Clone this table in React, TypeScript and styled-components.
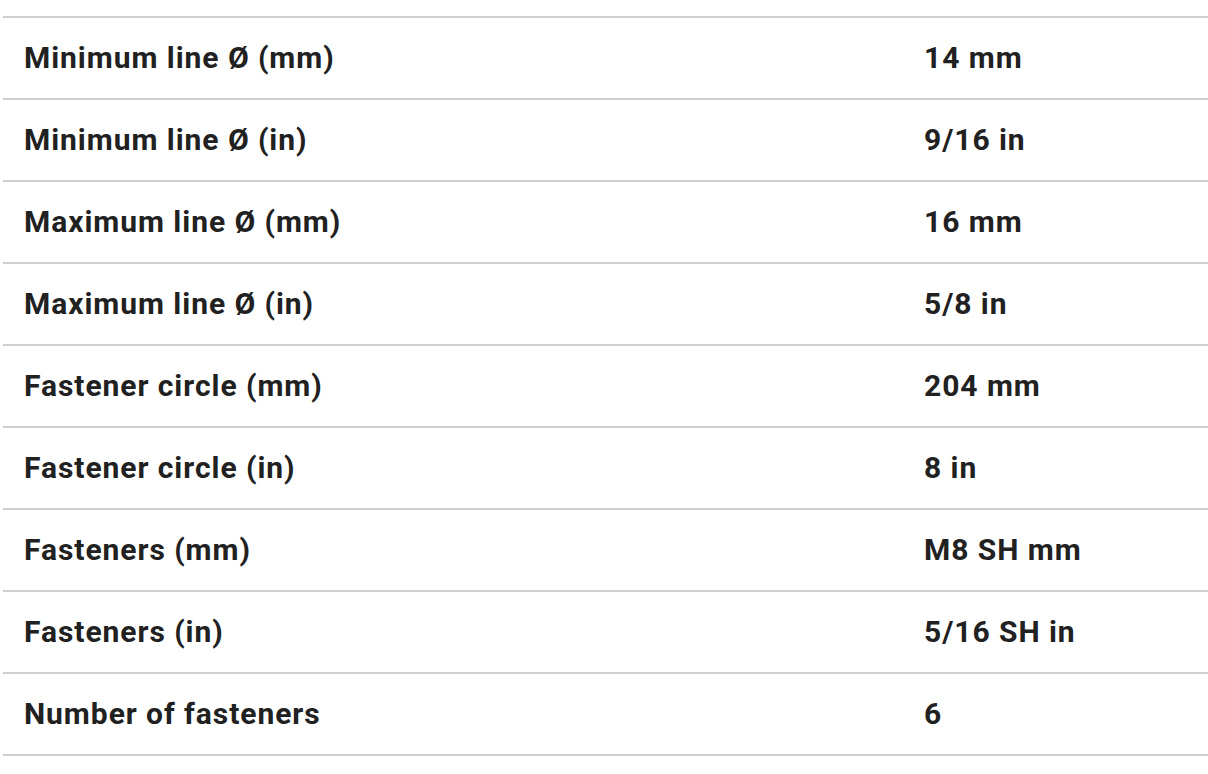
import styled, { createGlobalStyle } from 'styled-components';

const GlobalStyle = createGlobalStyle`
  body {
    margin: 0;
    background: #fff;
    font-family: Roboto, "Noto Sans", sans-serif;
  }
`;

const SpecTable = styled.div`
  padding: 16px 0 0 3px;
`;

const SpecRow = styled.div`
  display: grid;
  grid-template-columns: 900px 1fr;
  align-items: center;
  height: 80px;
  border-top: 2px solid #cfcfcf;
  &:last-child {
    border-bottom: 2px solid #cfcfcf;
  }
`;

const SpecCell = styled.div`
  padding-left: 21px;
  padding-bottom: 2px;
  font-size: 30px;
  font-weight: 700;
  letter-spacing: 0.95px;
  color: #212121;
  white-space: nowrap;
`;

const specs = [
  { label: 'Minimum line Ø (mm)', value: '14 mm' },
  { label: 'Minimum line Ø (in)', value: '9/16 in' },
  { label: 'Maximum line Ø (mm)', value: '16 mm' },
  { label: 'Maximum line Ø (in)', value: '5/8 in' },
  { label: 'Fastener circle (mm)', value: '204 mm' },
  { label: 'Fastener circle (in)', value: '8 in' },
  { label: 'Fasteners (mm)', value: 'M8 SH mm' },
  { label: 'Fasteners (in)', value: '5/16 SH in' },
  { label: 'Number of fasteners', value: '6' },
];

export default function App() {
  return (
    <>
      <GlobalStyle />
      <SpecTable>
        {specs.map((s) => (
          <SpecRow key={s.label}>
            <SpecCell>{s.label}</SpecCell>
            <SpecCell>{s.value}</SpecCell>
          </SpecRow>
        ))}
      </SpecTable>
    </>
  );
}
